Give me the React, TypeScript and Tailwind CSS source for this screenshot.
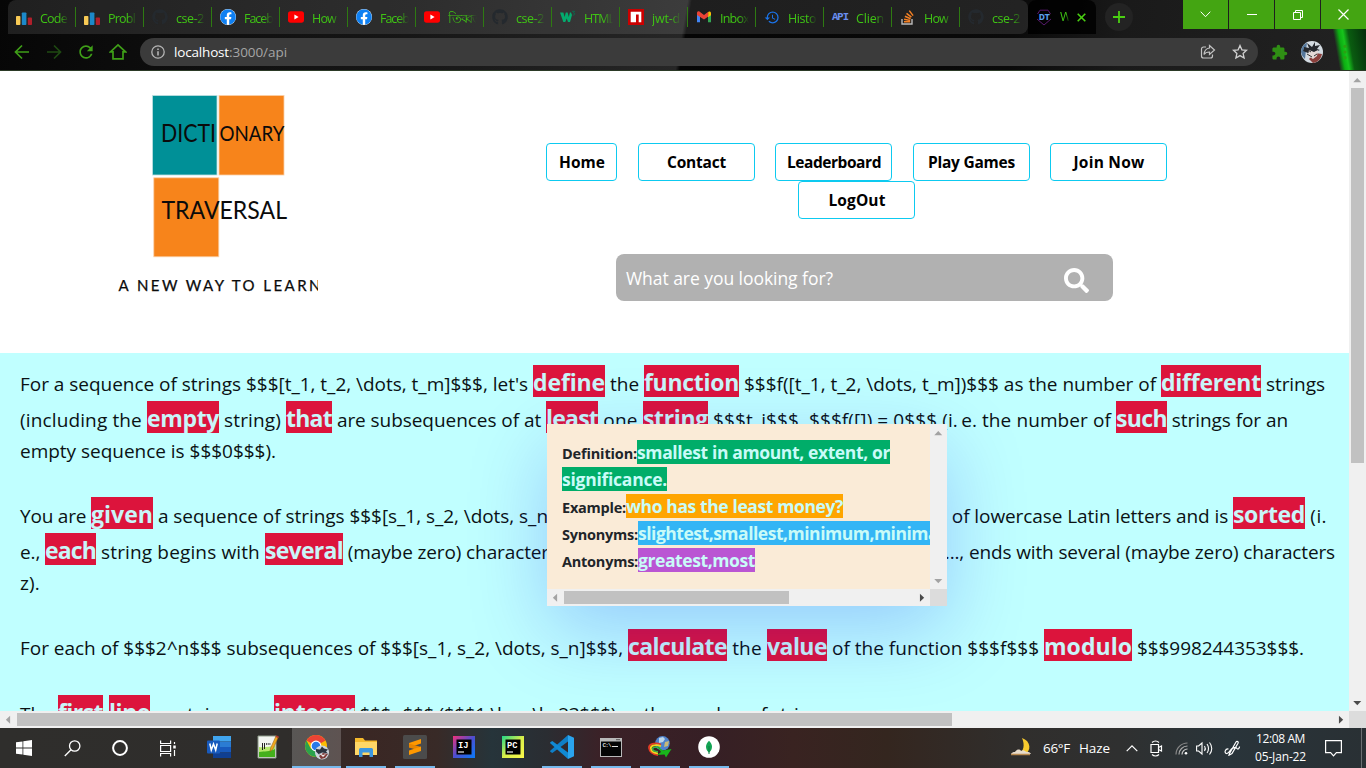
import { useLayoutEffect, useRef, type ReactNode } from 'react';
import { FaFacebook, FaGithub, FaSearch } from 'react-icons/fa';
import { MdExtension, MdHistory, MdRefresh } from 'react-icons/md';

/** Text whose letter spacing is adjusted so that it fills its box exactly. */
function Fit({ children, className = '' }: { children: string; className?: string }) {
  const box = useRef<HTMLSpanElement>(null);
  const text = useRef<HTMLSpanElement>(null);
  useLayoutEffect(() => {
    if (!box.current || !text.current) return;
    text.current.style.letterSpacing = '0px';
    const natural = text.current.getBoundingClientRect().width;
    const wanted = box.current.getBoundingClientRect().width;
    text.current.style.letterSpacing = `${(wanted - natural) / Array.from(children).length}px`;
  }, [children]);
  return (
    <span ref={box} className={`inline-block shrink-0 whitespace-pre ${className}`}>
      <span ref={text}>{children}</span>
    </span>
  );
}

const BarsIcon = () => (
  <svg width="16" height="16" viewBox="0 0 16 16">
    <rect x="0" y="7" width="4.4" height="9" rx="0.8" fill="#f8ca55" />
    <rect x="5.8" y="3.5" width="4.6" height="12.5" rx="0.8" fill="#1c89c9" />
    <rect x="11.8" y="8.5" width="4.2" height="7.5" rx="0.8" fill="#b01f2b" />
  </svg>
);
const GitIcon = () => <FaGithub size={16} color="#24292e" />;
const FbIcon = () => (
  <span className="flex size-4 items-center justify-center rounded-full bg-white">
    <FaFacebook size={16} color="#0f80f2" className="shrink-0" />
  </span>
);
const YtIcon = () => (
  <svg width="16" height="16" viewBox="0 0 16 16">
    <rect x="0" y="2.3" width="16" height="11.4" rx="2.6" fill="#f00" />
    <path d="M6.4 5.6v4.8L10.6 8z" fill="#fff" />
  </svg>
);
const W3Icon = () => (
  <svg width="16" height="16" viewBox="0 0 16 16">
    <path d="M0 3.500h3.400l1.200 4.500 1.200-4.500h1.800l1.200 4.500 1.100-4.500H11l1 2.500-2 7H8L6.700 9.500 5.300 13h-2z" fill="#04aa6d" />
    <path d="M12 2.300h2.800l-1.400 1.500c2.200.2 1.600 2.700-.7 2.200" fill="none" stroke="#0b6b50" strokeWidth="0.9" />
  </svg>
);
const NpmIcon = () => (
  <svg width="16" height="16" viewBox="0 0 16 16">
    <path d="M0 0h16v16H0z" fill="#cb0000" />
    <path d="M2.7 2.7h10.6v10.6h-2.6V5.4H8v7.9H2.7z" fill="#fff" />
  </svg>
);
const GmailIcon = () => (
  <svg width="16" height="16" viewBox="0 0 16 16">
    <path d="M1 4v9.3h3V7z" fill="#4285f4" />
    <path d="M15 4v9.3h-3V7z" fill="#34a853" />
    <path d="M1 6V4c0-1.6 1.700-2.100 2.700-1.200L8 6l4.300-3.200V7.400L8 10.600z" fill="#ea4335" />
    <path d="M12.200 3c1-1 2.800-.5 2.800 1v2.200l-2.800 2z" fill="#fbbc04" />
  </svg>
);
const HistoryIcon = () => <MdHistory size={17} color="#1a73e8" />;
const ApiIcon = () => (
  <Fit className="w-4 font-['Liberation_Mono'] text-[10.5px] leading-4 font-bold text-[#6a8ff0]">API</Fit>
);
const SoIcon = () => (
  <svg width="16" height="16" viewBox="0 0 16 16">
    <path d="M2 10v5h10v-5" fill="none" stroke="#bcbbbb" strokeWidth="1.400" />
    <path d="M4 12.800h6.200M4.100 10.300l6.100 1.100M4.900 7.300l5.700 2.500M6.500 4.300l4.900 3.900M9.300 1.600l3.800 5" stroke="#f48024" strokeWidth="1.500" />
  </svg>
);
const DtIcon = () => (
  <svg width="18" height="18" viewBox="0 0 18 18">
    <path d="M2.500 6 5 2.200h8L15.500 6M2 11l7 6 7-6" fill="none" stroke="#5a1a70" strokeWidth="1" />
    <text x="4" y="12" textLength="11" lengthAdjust="spacingAndGlyphs" fontSize="8" fontWeight="800" fontFamily="Inter" fill="#5aa0ee">DT</text>
  </svg>
);

type Tab = { icon: () => ReactNode; label: string; width: string };
const tabs: Tab[] = [
  { icon: BarsIcon, label: 'Code', width: 'w-[27px]' },
  { icon: BarsIcon, label: 'Probl', width: 'w-[27px]' },
  { icon: GitIcon, label: 'cse-2', width: 'w-[28px]' },
  { icon: FbIcon, label: 'Faceb', width: 'w-[29px]' },
  { icon: YtIcon, label: 'How', width: 'w-[24px]' },
  { icon: FbIcon, label: 'Faceb', width: 'w-[29px]' },
  { icon: YtIcon, label: 'তিব্বত', width: 'w-[31px]' },
  { icon: GitIcon, label: 'cse-2', width: 'w-[28px]' },
  { icon: W3Icon, label: 'HTML', width: 'w-[30px]' },
  { icon: NpmIcon, label: 'jwt-d', width: 'w-[28px]' },
  { icon: GmailIcon, label: 'Inbox', width: 'w-[29px]' },
  { icon: HistoryIcon, label: 'Histo', width: 'w-[28px]' },
  { icon: ApiIcon, label: 'Clien', width: 'w-[28px]' },
  { icon: SoIcon, label: 'How', width: 'w-[24px]' },
  { icon: GitIcon, label: 'cse-2', width: 'w-[28px]' },
];

const winButton = 'flex h-[29px] w-[45px] items-center justify-center bg-[#44a512]';

function TabStrip() {
  return (
    <div className="flex h-[34px] pl-2">
      <div className="flex rounded-t-lg rounded-br-lg bg-white/10">
        {tabs.map(({ icon: Icon, label, width }, i) => (
          <div key={i} className="flex w-[68px] items-center pl-2">
            <span className="flex size-4 shrink-0 items-center justify-center">
              <Icon />
            </span>
            <span className="ml-2 w-[30px] overflow-hidden [mask-image:linear-gradient(to_right,#000_65%,transparent)]">
              <Fit className={`text-[12.5px] leading-[18px] text-[#3fc414] ${width}`}>{label}</Fit>
            </span>
            <span className={i < 14 ? 'ml-[6px] h-5 w-px shrink-0 bg-[#2e7a12]' : 'hidden'} />
          </div>
        ))}
      </div>
      <div className="flex w-[68px] items-center rounded-t-lg bg-black/85 pl-[7px]">
        <DtIcon />
        <span className="ml-[7px] w-[9px] overflow-hidden text-[12.5px] leading-[18px] text-[#3fc414] [mask-image:linear-gradient(to_right,#000_70%,transparent)]">W</span>
        <svg className="ml-2" width="9" height="9" viewBox="0 0 9 9" stroke="#4ad012" strokeWidth="1.600">
          <path d="m.7.7 7.600 7.600M8.300.7.7 8.300" />
        </svg>
      </div>
      <div className="mt-[3px] ml-[9px] flex size-7 items-center justify-center rounded-full bg-[#232323]">
        <svg width="12" height="12" viewBox="0 0 12 12" stroke="#4ad012" strokeWidth="1.800">
          <path d="M6 0v12M0 6h12" />
        </svg>
      </div>
      <div className="ml-auto flex gap-px">
        <div className={winButton}>
          <svg width="11" height="7" viewBox="0 0 11 7" fill="none" stroke="#fff"><path d="m.7.7 4.800 5 4.800-5" /></svg>
        </div>
        <div className={winButton}><span className="h-px w-[10px] bg-white" /></div>
        <div className={winButton}>
          <svg width="10" height="10" viewBox="0 0 10 10" fill="none" stroke="#fff"><path d="M.5 2.500h7v7h-7zM2.500 2.500v-2h7v7h-2" /></svg>
        </div>
        <div className={winButton}>
          <svg width="11" height="11" viewBox="0 0 11 11" stroke="#fff" strokeWidth="1.200"><path d="m.5.5 10 10M10.500.5l-10 10" /></svg>
        </div>
      </div>
    </div>
  );
}

function AddressBar() {
  return (
    <div className="flex h-[36px] items-center">
      <svg className="ml-[14px]" width="16" height="16" viewBox="0 0 16 16" fill="none" stroke="#3f9f18" strokeWidth="1.700"><path d="M15 8H2M8 1.500 1.500 8 8 14.500" /></svg>
      <svg className="ml-4" width="16" height="16" viewBox="0 0 16 16" fill="none" stroke="#1f4a12" strokeWidth="1.700"><path d="M1 8h13M8 1.500 14.500 8 8 14.500" /></svg>
      <MdRefresh className="ml-[14px]" size={20} color="#3f9f18" />
      <svg className="ml-[13px]" width="18" height="18" viewBox="0 0 18 18" fill="none" stroke="#3f9f18" strokeWidth="1.700"><path d="M1.500 8.800 9 1.800l7.500 7H14v7H4v-7z" /></svg>
      <div className="ml-[13px] flex h-7 w-[1118px] items-center rounded-full bg-[#3b3b3b] pr-[10px] pl-[11px]">
        <svg width="14" height="14" viewBox="0 0 14 14" fill="none" stroke="#b5b5b5" strokeWidth="1.300"><circle cx="7" cy="7" r="6.200" /><path d="M7 6.200v4.300M7 3.400v1.500" strokeWidth="1.600" /></svg>
        <Fit className="ml-[9px] w-[55px] text-[13.5px] text-white">localhost</Fit>
        <Fit className="w-[58px] text-[13.5px] text-[#a5a5a5]">:3000/api</Fit>
        <svg className="ml-auto" width="16" height="16" viewBox="0 0 16 16" fill="none" stroke="#c4c4c4" strokeWidth="1.200"><path d="M6 3H3.500a2 2 0 0 0-2 2v7a2 2 0 0 0 2 2h7a2 2 0 0 0 2-2v-1.500M9.500 1.500 14.500 6l-5 4.500V8C6.500 8 5 8.800 4 10.500 4.300 7 6 4.500 9.500 4z" /></svg>
        <svg className="ml-4" width="16" height="16" viewBox="0 0 16 16" fill="none" stroke="#d0d0d0" strokeWidth="1.300"><path d="m8 1.500 1.900 4.300 4.600.5-3.400 3.100 1 4.600L8 11.600 3.900 14l1-4.600L1.500 6.300l4.600-.5z" /></svg>
      </div>
      <MdExtension className="ml-[13px]" size={17} color="#2f8f14" />
      <svg className="ml-[13px]" width="22" height="22" viewBox="0 0 22 22">
        <circle cx="11" cy="11" r="11" fill="#d3dbe2" />
        <path d="M0 11a11 11 0 0 1 6-9.500L5 9l-1 9A11 11 0 0 1 0 11" fill="#54779b" />
        <path d="m3 6 5 1-2-5 5 4 3-5v4l5-1-3 4 3 1-5 2-7 1-5-2 1-2z" fill="#25282e" />
        <path d="m14 12 7 1a11 11 0 0 1-9 9l-4-4z" fill="#8a3f3b" />
        <path d="m8 9 5 2 4-2-1 6-4 3-5-3z" fill="#e4d8d5" />
        <path d="m6 13 5 3M13 15l3-2M7 9l3 2" stroke="#333" />
      </svg>
      <svg className="ml-[20px]" width="4" height="16" viewBox="0 0 4 16" fill="#2ca013"><circle cx="2" cy="2.300" r="1.600" /><circle cx="2" cy="8" r="1.600" /><circle cx="2" cy="13.700" r="1.600" /></svg>
    </div>
  );
}

function Logo() {
  return (
    <svg width="200" height="212" viewBox="118 90 200 212" fontFamily="Lato" fill="#0b0b0b">
      <rect x="152.500" y="95.500" width="64.500" height="79.500" fill="#009097" stroke="#bfe0e2" strokeWidth="0.800" />
      <rect x="219" y="95.500" width="65" height="79.500" fill="#f7841b" stroke="#fbd0a8" strokeWidth="0.800" />
      <rect x="153.800" y="177.800" width="65" height="79" fill="#f7841b" stroke="#fbd0a8" strokeWidth="0.800" />
      <text x="161" y="142" fontSize="25" textLength="55" lengthAdjust="spacingAndGlyphs">DICTI</text>
      <text x="219.500" y="140.500" fontSize="20.500" textLength="65" lengthAdjust="spacingAndGlyphs">ONARY</text>
      <text x="161.500" y="219" fontSize="25" textLength="125.500" lengthAdjust="spacingAndGlyphs">TRAVERSAL</text>
      <text x="118.500" y="291" fontSize="15" stroke="#0b0b0b" strokeWidth="0.250" textLength="202" lengthAdjust="spacing">A NEW WAY TO LEARN</text>
    </svg>
  );
}

function NavButton({ label, box, text }: { label: string; box: string; text: string }) {
  return (
    <button className={`flex h-[38px] items-center justify-center rounded border border-[#0dcaf0] bg-white pl-px ${box}`}>
      <Fit className={`text-[15.5px] leading-6 font-bold text-black ${text}`}>{label}</Fit>
    </button>
  );
}

function Header() {
  return (
    <header className="flex h-[282px] bg-white">
      <div className="ml-[118px] w-[200px] pt-[19px]"><Logo /></div>
      <div className="ml-[228px] w-[621px] pt-[72px]">
        <div className="flex justify-between">
          <NavButton label="Home" box="w-[71px]" text="w-[46px]" />
          <NavButton label="Contact" box="w-[117px]" text="w-[59px]" />
          <NavButton label="Leaderboard" box="w-[117px]" text="w-[94px]" />
          <NavButton label="Play Games" box="w-[117px]" text="w-[87px]" />
          <NavButton label="Join Now" box="w-[117px]" text="w-[71px]" />
        </div>
        <div className="flex justify-center"><NavButton label="LogOut" box="w-[117px]" text="w-[57px]" /></div>
        <div className="mt-[35px] ml-[70px] flex h-[47px] w-[497px] items-center rounded-lg bg-[#b1b1b1] pr-6 pl-[10px]">
          <Fit className="w-[207px] text-[17.5px] leading-6 text-white">What are you looking for?</Fit>
          <FaSearch className="mt-[6px] ml-auto" size={25} color="#fff" />
        </div>
      </div>
    </header>
  );
}

const T = ({ children, w }: { children: string; w: string }) => (
  <Fit className={`text-[19px] leading-8 text-[#0b1214] ${w}`}>{children}</Fit>
);
const M = ({ children, w }: { children: string; w: string }) => (
  <Fit className={`h-8 bg-[#dc143c] text-[23px] leading-[35px] font-bold text-[#c9f5f8] ${w}`}>{children}</Fit>
);
const Row = ({ children, gap = '' }: { children: ReactNode; gap?: string }) => (
  <div className={`flex h-8 items-baseline ${gap}`}>{children}</div>
);

function Article() {
  return (
    <article className="h-[358px] overflow-hidden bg-[#c0ffff] pt-3 pl-5">
      <Row>
        <T w="w-[513px]">{"For a sequence of strings $$$[t_1, t_2, \\dots, t_m]$$$, let's "}</T>
        <M w="w-[72px]">define</M>
        <T w="w-[39px]">{' the '}</T>
        <M w="w-[95px]">function</M>
        <T w="w-[422px]">{' $$$f([t_1, t_2, \\dots, t_m])$$$ as the number of '}</T>
        <M w="w-[100px]">different</M>
        <T w="w-[64px]">{' strings'}</T>
      </Row>
      <Row gap="mt-1">
        <T w="w-[127px]">{'(including the '}</T>
        <M w="w-[72px]">empty</M>
        <T w="w-[67px]">{' string) '}</T>
        <M w="w-[46px]">that</M>
        <T w="w-[214px]">{' are subsequences of at '}</T>
        <M w="w-[52px]">least</M>
        <T w="w-[45px]">{' one '}</T>
        <M w="w-[65px]">string</M>
        <T w="w-[408px]">{' $$$t_i$$$, $$$f([]) = 0$$$ (i.\u2009e. the number of '}</T>
        <M w="w-[51px]">such</M>
        <T w="w-[121px]">{' strings for an'}</T>
      </Row>
      <Row gap="-mt-px pt-[3px]"><T w="w-[256px]">empty sequence is $$$0$$$).</T></Row>
      <Row gap="mt-[33px]">
        <T w="w-[71px]">{'You are '}</T>
        <M w="w-[62px]">given</M>
        <T w="w-[395px]">{' a sequence of strings $$$[s_1, s_2, \\dots, s_n'}</T>
        <span className="w-[399px] shrink-0" />
        <T w="w-[286px]">{' of lowercase Latin letters and is '}</T>
        <M w="w-[72px]">sorted</M>
        <T w="w-[22px]">{' (i.'}</T>
      </Row>
      <Row gap="mt-1">
        <T w="w-[25px]">{'e., '}</T>
        <M w="w-[51px]">each</M>
        <T w="w-[169px]">{' string begins with '}</T>
        <M w="w-[78px]">several</M>
        <T w="w-[206px]">{' (maybe zero) character'}</T>
        <span className="w-[391px] shrink-0" />
        <T w="w-[395px]">{' ..., ends with several (maybe zero) characters'}</T>
      </Row>
      <Row gap="-mt-px pt-[3px]"><T w="w-[20px]">z).</T></Row>
      <Row gap="mt-[33px]">
        <T w="w-[608px]">{'For each of $$$2^n$$$ subsequences of $$$[s_1, s_2, \\dots, s_n]$$$, '}</T>
        <M w="w-[99px]">calculate</M>
        <T w="w-[40px]">{' the '}</T>
        <M w="w-[60px]">value</M>
        <T w="w-[217px]">{' of the function $$$f$$$ '}</T>
        <M w="w-[88px]">modulo</M>
        <T w="w-[172px]">{' $$$998244353$$$.'}</T>
      </Row>
      <Row gap="mt-[34px]">
        <T w="w-[38px]">{'The '}</T>
        <M w="w-[45px]">first</M>
        <T w="w-[6px]"> </T>
        <M w="w-[41px]">line</M>
        <T w="w-[124px]">{' contains one '}</T>
        <M w="w-[81px]">integer</M>
        <T w="w-[478px]">{' $$$n$$$ ($$$1 \\le n \\le 23$$$) \u2014 the number of strings.'}</T>
      </Row>
    </article>
  );
}

function Arrow({ dir, dim = false }: { dir: 'up' | 'down' | 'left' | 'right'; dim?: boolean }) {
  const d = { up: 'M4 10.500h7.500L7.800 6.500z', down: 'M4 6.500h7.500L7.800 10.500z', left: 'M9.500 4.500v7.500L5.500 8.200z', right: 'M6.500 4.500v7.500L10.500 8.200z' }[dir];
  return <svg className="size-[17px] shrink-0" viewBox="0 0 16 16"><path d={d} fill={dim ? '#a3a3a3' : '#4b4b4b'} /></svg>;
}

const label = "text-[14.5px] leading-[25px] font-bold text-[#212529]";
const answer = 'h-6 text-[17.5px] leading-6 font-bold text-[#c9fbf8]';

function Popup() {
  return (
    <div className="absolute top-[353px] left-[547px] flex h-[182px] w-[400px] flex-col shadow-[0_24px_80px_0_rgba(0,20,240,0.22)]">
      <div className="flex h-[165px]">
        <div className="w-[383px] overflow-hidden bg-[#faebd7] pt-[16px] pl-[15px]">
          <div className="flex h-[27px] items-baseline"><Fit className={`${label} w-[75px]`}>Definition:</Fit><Fit className={`${answer} w-[253px] bg-[#00ad69]`}>smallest in amount, extent, or</Fit></div>
          <div className="flex h-[27px] items-baseline"><Fit className={`${answer} w-[105px] bg-[#00ad69]`}>significance.</Fit></div>
          <div className="flex h-[27px] items-baseline"><Fit className={`${label} w-[64px]`}>Example:</Fit><Fit className={`${answer} w-[217px] bg-[#ffa500]`}>who has the least money?</Fit></div>
          <div className="flex h-[27px] items-baseline"><Fit className={`${label} w-[76px]`}>Synonyms:</Fit><Fit className={`${answer} w-[305px] bg-[#33b5f5]`}>slightest,smallest,minimum,minimal</Fit></div>
          <div className="flex h-[27px] items-baseline"><Fit className={`${label} w-[76px]`}>Antonyms:</Fit><Fit className={`${answer} w-[117px] bg-[#ba55d3]`}>greatest,most</Fit></div>
        </div>
        <div className="flex w-[17px] flex-col justify-between bg-[#f0f0f0]"><Arrow dir="up" dim /><Arrow dir="down" dim /></div>
      </div>
      <div className="flex h-[17px] items-center bg-[#f0f0f0]">
        <Arrow dir="left" dim /><span className="h-[13px] w-[225px] bg-[#c1c1c1]" /><span className="flex-1" /><Arrow dir="right" /><span className="h-[17px] w-[17px] bg-[#dcdcdc]" />
      </div>
    </div>
  );
}

function TaskApp({ children, active = false, open = false }: { children: ReactNode; active?: boolean; open?: boolean }) {
  return (
    <div className={`flex h-10 w-[49px] flex-col items-center ${active ? 'bg-white/20' : ''}`}>
      <div className="flex h-[38px] items-center justify-center">{children}</div>
      <span className={open ? (active ? 'h-0.5 w-full bg-[#76b9ed]' : 'h-0.5 w-10 bg-[#76b9ed]') : 'hidden'} />
    </div>
  );
}

function JetBrains({ text, id, from, mid, to }: { text: string; id: string; from: string; mid: string; to: string }) {
  return (
    <svg width="22" height="22" viewBox="0 0 22 22">
      <defs><linearGradient id={id} x1="0" y1="0" x2="1" y2="1"><stop stopColor={from} /><stop offset=".5" stopColor={mid} /><stop offset="1" stopColor={to} /></linearGradient></defs>
      <rect width="22" height="22" fill={`url(#${id})`} /><rect x="3.500" y="3.500" width="15" height="15" fill="#000" />
      <text x="5" y="11.500" fontSize="8.500" fontWeight="700" fontFamily="Liberation Mono" textLength="10.500" lengthAdjust="spacingAndGlyphs" fill="#fff">{text}</text>
      <path d="M5 16h6" stroke="#fff" strokeWidth="1.100" />
    </svg>
  );
}

function Taskbar() {
  return (
    <div className="flex h-10 bg-[linear-gradient(90deg,#2f2e2c_0%,#2f2d2b_21%,#3a2724_27%,#382a27_32%,#26343a_36%,#2a2d32_40%,#3b2127_44%,#361f25_52%,#392321_58%,#34261f_65%,#302e2c_74%,#2f3030_82%,#29343a_90%,#293034_100%)] text-white">
      <div className="flex w-12 items-center justify-center"><svg width="16" height="16" viewBox="0 0 16 16" fill="#fff"><path d="M0 2.300 6.500 1.400v6.200H0zM7.300 1.300 16 0v7.600H7.300zM0 8.400h6.500v6.200L0 13.700zM7.300 8.400H16V16l-8.700-1.200z" /></svg></div>
      <div className="flex w-12 items-center justify-center"><svg width="17" height="17" viewBox="0 0 17 17" fill="none" stroke="#fff" strokeWidth="1.300"><circle cx="10.700" cy="6" r="5.200" /><path d="M7 9.800.8 16" /></svg></div>
      <div className="flex w-12 items-center justify-center"><svg width="16" height="16" viewBox="0 0 16 16" fill="none" stroke="#fff" strokeWidth="2"><circle cx="8" cy="8" r="6.900" /></svg></div>
      <div className="flex w-[50px] items-center pl-4"><svg width="17" height="17" viewBox="0 0 17 17" fill="none" stroke="#fff" strokeWidth="1.200"><path d="M.6.5v3h10v-3M.6 5.500h10v6H.6zM.6 16.500v-3h10v3M14.500 2v2M14.500 10v6" /><path d="M14.500 5.500v3" stroke="#fff" strokeWidth="2.500" /></svg></div>
      <TaskApp>
        <svg width="24" height="22" viewBox="0 0 24 22"><path d="M6 0h18v5.500H6z" fill="#41a5ee" /><path d="M6 5.500h18V11H6z" fill="#2b7cd3" /><path d="M6 11h18v5.500H6z" fill="#185abd" /><path d="M6 16.500h18V22H6z" fill="#103f91" /><rect y="4.500" width="13" height="13" rx="1" fill="#185abd" /><path d="m2.800 7.500 1.500 6.500 2.200-6 2.200 6 1.500-6.500" fill="none" stroke="#fff" strokeWidth="1.500" /></svg>
      </TaskApp>
      <TaskApp>
        <svg width="22" height="24" viewBox="0 0 22 24"><path d="M1 1h18v22H1z" fill="#f2f4f0" stroke="#8d9a88" /><path d="M2 12c6 1 11-1 16-1v11H2z" fill="#b5e86a" /><path d="M2 17c6-1 10 0 16-3v8H2z" fill="#45b01c" /><path d="M5.500 8v7M7.500 8v6" stroke="#222" strokeWidth="1" /><path d="M9 9h5" stroke="#222" strokeWidth="1.300" strokeDasharray="1.300 1" /><path d="m13 16.500.8-4L19 1l2.300 1.200L16 14z" fill="#f0a91e" stroke="#8c5a14" strokeWidth=".5" /><path d="m19 1 2.500 1.500" stroke="#b03a2e" strokeWidth="2" /></svg>
      </TaskApp>
      <TaskApp active open>
        <svg width="26" height="26" viewBox="0 0 26 26"><circle cx="12" cy="12" r="11" fill="#fbbc05" /><path d="M12 12 2.500 6.500a11 11 0 0 1 19 0z" fill="#ea4335" /><path d="M12 12 7 15 2.500 6.500A11 11 0 0 0 12 23l5-8.500z" fill="#2ba24c" /><circle cx="12" cy="12" r="5.400" fill="#fff" /><circle cx="12" cy="12" r="4.300" fill="#2979e8" /><circle cx="18" cy="18.500" r="7" fill="#ccd5dd" /><path d="m12 15 4 .5 2-3 2 2 4 1-2 2 2 2-6-1-3 2-3-3z" fill="#2b3440" /><path d="m19 19 5 1-3 4-4 1-2-3z" fill="#7f3b38" /><path d="m15 19 4 2 3-1-3 3z" fill="#eee" /></svg>
      </TaskApp>
      <TaskApp open>
        <svg width="22" height="19" viewBox="0 0 22 19"><path d="M0 0h8l2 2.500h12V17H0z" fill="#f5b92c" /><path d="M1 4h21v13H0V4z" fill="#ffd767" /><path d="M4 19v-7.500A1.500 1.500 0 0 1 5.500 10h11a1.500 1.500 0 0 1 1.500 1.500V19h-3.500v-4.500h-7V19z" fill="#3c97e0" /></svg>
      </TaskApp>
      <TaskApp open>
        <svg width="24" height="24" viewBox="0 0 24 24"><rect width="24" height="24" rx="1.500" fill="#4b4b4b" /><path d="M18 4v4.500L6 12.500V8z" fill="#ff9800" /><path d="M6 8.500v4l12 3.500v-4z" fill="#e88500" /><path d="M18 11.500V16L6 20v-4.500z" fill="#ff9800" /></svg>
      </TaskApp>
      <TaskApp><JetBrains text="IJ" id="ij" from="#f0317a" mid="#4b4fd0" to="#087cfa" /></TaskApp>
      <TaskApp><JetBrains text="PC" id="pc" from="#21d789" mid="#d8ee4a" to="#fcf84a" /></TaskApp>
      <TaskApp open>
        <svg width="24" height="24" viewBox="0 0 24 24"><path d="M18 0v6.500L2.300 18 .2 16.800v-1z" fill="#0f7fc8" /><path d="M.2 8.200v-1l2.100-1.200L18 17.500V24z" fill="#1189d3" /><path d="M18 0l6 2.800v18.400L18 24z" fill="#2aa4ee" /></svg>
      </TaskApp>
      <TaskApp open>
        <svg width="22" height="19" viewBox="0 0 22 19"><path d="M0 0h22v19H0z" fill="#b9b9b9" /><path d="M1 3.500h20V18H1z" fill="#050505" /><path d="M16 1.700h4" stroke="#555" /><text x="2.500" y="9" fontSize="6" fontFamily="Liberation Mono" fontWeight="700" fill="#ddd" textLength="9">C:\</text><path d="M12 8.500h6" stroke="#ddd" /></svg>
      </TaskApp>
      <TaskApp open>
        <svg width="25" height="23" viewBox="0 0 25 23"><circle cx="15.500" cy="7.300" r="7.300" fill="#4f83cc" /><path d="m12 2 4-1 2 2-2 3-4 1z" fill="#bcd6e8" /><path d="m18 6 4-1-1 5-4 1z" fill="#c9b977" /><path d="M14 8.500C8 6 1.500 8 2 12s4 6.500 9 7" fill="none" stroke="#e23a24" strokeWidth="1.800" /><path d="M14 10.200C9 8 3.500 9.500 3.800 12.300s3 4.700 7.200 5" fill="none" stroke="#f7d51d" strokeWidth="1.800" /><path d="M13 12c-4-1.500-7.500-1-7.400 1s2 2.500 5.400 2.700" fill="none" stroke="#3ab54a" strokeWidth="1.600" /><path d="m10 10 6 4.500 8.500-1.500L19 21.500l-1.500-3-7.500.5 4-3z" fill="#18b51b" /></svg>
      </TaskApp>
      <TaskApp open>
        <svg width="22" height="22" viewBox="0 0 22 22"><circle cx="11" cy="11" r="10.800" fill="#fff" /><path d="M11 4.800c4 3.700 4 8.400 0 12-4-3.600-4-8.300 0-12" fill="#13a454" /><path d="M11 10v8" stroke="#0b8043" /></svg>
      </TaskApp>
      <div className="ml-auto flex items-center">
        <svg width="24" height="20" viewBox="0 0 24 20"><path d="M12 0c9 3 10 13 2 17H8C14 13 15 7 12 0" fill="#f8cb2e" /><path d="M5 14c1-3 5-3 6-1 2-2 5 0 5 1 2-.5 4 .5 5 2H1c1-1.500 2-2 4-2" fill="#e8dccb" /><path d="M1 16.500h19" stroke="#b98b50" strokeWidth="1.500" /></svg>
        <Fit className="ml-[9px] w-[27px] text-[13.500px]">66°F</Fit>
        <Fit className="ml-[9px] w-[31px] text-[13.500px]">Haze</Fit>
        <svg className="ml-[16px]" width="12" height="7" viewBox="0 0 12 7" fill="none" stroke="#fff" strokeWidth="1.200"><path d="M.7 6.200 6 .9l5.300 5.300" /></svg>
        <svg className="ml-[12px]" width="13" height="17" viewBox="0 0 13 17" fill="none" stroke="#fff" strokeWidth="1.200"><path d="M1 4.500h7.500v8H1zM8.500 7.500 11.500 6v5L8.500 9.500M2 2.500c2-1.800 5-1.800 7 0M2 14.500c2 1.800 5 1.800 7 0" /></svg>
        <svg className="ml-[12px]" width="13" height="13" viewBox="0 0 13 13" fill="none" strokeWidth="1.200"><path d="M1 12.500A11.500 11.500 0 0 1 12.500 1" stroke="#888" /><path d="M4 12.500A8.500 8.500 0 0 1 12.500 4" stroke="#aaa" /><path d="M7 12.500A5.500 5.500 0 0 1 12.500 7" stroke="#ccc" /><circle cx="11" cy="11.200" r="1.300" fill="#fff" /></svg>
        <svg className="ml-[8px]" width="17" height="15" viewBox="0 0 17 15" fill="none" stroke="#fff" strokeWidth="1.100"><path d="M.6 5h2L6 2v11L2.600 10h-2zM8.500 5c1 1.500 1 3.500 0 5M11 3c2 2.500 2 6.500 0 9M13.500 1.500c3 3.500 3 8.500 0 12" /></svg>
        <svg className="ml-[11px]" width="17" height="16" viewBox="0 0 17 16" fill="none" stroke="#fff" strokeWidth="1.200"><path d="M5.500 13.500 12 2c1-1.300 2.700-.3 2 1.200L8 13.500l-3 1.700zM4.500 9C1 8.500 0 13 2.500 13.500c2 .5 3.500-3 5-4.500s4.500-2 5.500-.5 2.500-.5 2.500-2" /></svg>
        <div className="ml-[14px] flex w-[51px] flex-col items-center">
          <Fit className="w-[49px] text-[12px] leading-[18px]">12:08 AM</Fit>
          <Fit className="w-[51px] text-[12px] leading-[18px]">05-Jan-22</Fit>
        </div>
        <svg className="ml-[19px]" width="17" height="17" viewBox="0 0 17 17" fill="none" stroke="#fff" strokeWidth="1.200"><path d="M.6.6h15.800v12h-5L8.500 15.800l-2.900-3.200h-5z" /></svg>
        <span className="mr-1 ml-[19px] h-10 w-px bg-[#6a6f72]" />
      </div>
    </div>
  );
}

export default function App() {
  return (
    <div className="flex h-[768px] w-[1366px] flex-col overflow-hidden font-['Open_Sans','Noto_Sans',sans-serif]">
      <div className="h-[71px] border-b border-[#2b3a26] bg-[linear-gradient(80deg,transparent_0_97.2%,#0cae12_97.6%,#17c41c_97.9%,#0a5c10_98.3%,#03200a_100%),linear-gradient(100deg,#060606_0%,#0d0d0d_12%,#161616_30%,#262626_49.9%,#050505_50.2%,#0a0a0a_74%,#1a1a1a_82%,#222_100%)]">
        <TabStrip />
        <AddressBar />
      </div>
      <div className="flex h-[640px]">
        <div className="relative w-[1349px] overflow-hidden">
          <Header />
          <Article />
          <Popup />
        </div>
        <div className="flex w-[17px] flex-col items-center bg-[#f0f0f0]"><Arrow dir="up" dim /><span className="h-[375px] w-[13px] bg-[#c1c1c1]" /><span className="flex-1" /><Arrow dir="down" /></div>
      </div>
      <div className="flex h-[17px] items-center bg-[#f0f0f0]">
        <Arrow dir="left" dim /><span className="h-[13px] w-[935px] bg-[#c1c1c1]" /><span className="flex-1" /><Arrow dir="right" /><span className="h-[17px] w-[17px] bg-[#dcdcdc]" />
      </div>
      <Taskbar />
    </div>
  );
}
